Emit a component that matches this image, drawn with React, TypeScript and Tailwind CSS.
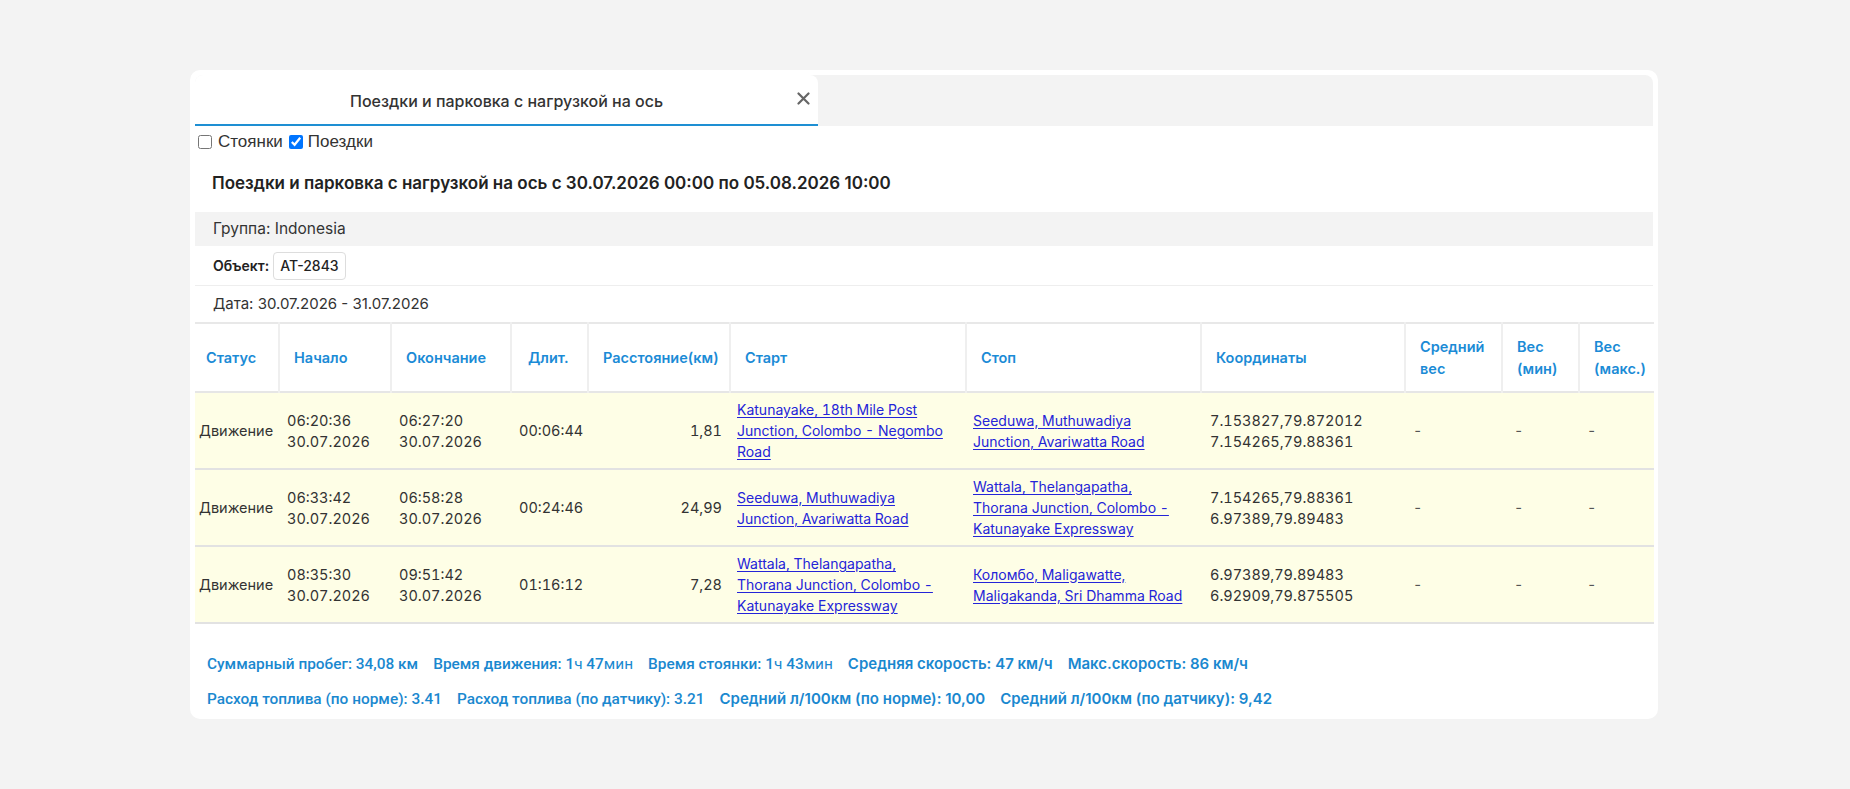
import { Fragment } from 'react';

interface Trip {
  start: [string, string];
  end: [string, string];
  duration: string;
  distance: string;
  from: string[];
  to: string[];
  coords: [string, string];
}

const trips: Trip[] = [
  {
    start: ['06:20:36', '30.07.2026'],
    end: ['06:27:20', '30.07.2026'],
    duration: '00:06:44',
    distance: '1,81',
    from: ['Katunayake, 18th Mile Post', 'Junction, Colombo - Negombo', 'Road'],
    to: ['Seeduwa, Muthuwadiya', 'Junction, Avariwatta Road'],
    coords: ['7.153827,79.872012', '7.154265,79.88361'],
  },
  {
    start: ['06:33:42', '30.07.2026'],
    end: ['06:58:28', '30.07.2026'],
    duration: '00:24:46',
    distance: '24,99',
    from: ['Seeduwa, Muthuwadiya', 'Junction, Avariwatta Road'],
    to: ['Wattala, Thelangapatha,', 'Thorana Junction, Colombo -', 'Katunayake Expressway'],
    coords: ['7.154265,79.88361', '6.97389,79.89483'],
  },
  {
    start: ['08:35:30', '30.07.2026'],
    end: ['09:51:42', '30.07.2026'],
    duration: '01:16:12',
    distance: '7,28',
    from: ['Wattala, Thelangapatha,', 'Thorana Junction, Colombo -', 'Katunayake Expressway'],
    to: ['Коломбо, Maligawatte,', 'Maligakanda, Sri Dhamma Road'],
    coords: ['6.97389,79.89483', '6.92909,79.875505'],
  },
];

const Lines = ({ lines }: { lines: string[] }) => (
  <>
    {lines.map((l, i) => (
      <Fragment key={i}>
        {l}
        {i < lines.length - 1 && <br />}
      </Fragment>
    ))}
  </>
);

const Link = ({ lines }: { lines: string[] }) => (
  <a href="#" className="text-[14px] text-[#2424d8] underline underline-offset-2 whitespace-nowrap">
    <Lines lines={lines} />
  </a>
);

const th = 'px-[14px] text-left align-middle font-semibold text-[#1b8bd6] border-l-2 border-[#efefef] first:border-l-0';
const td = 'px-[8px] align-middle';
const roboto = "font-['Roboto',sans-serif] font-medium text-[15.4px]";

export default function App() {
  return (
    <div className="min-h-screen bg-[#f3f3f3] pt-[70px]">
      <div className="ml-[190px] w-[1468px] bg-white rounded-[10px] px-[5px] pt-[5px] pb-[10px] text-[#333]">
        {/* tabs */}
        <div className="h-[51px] bg-[#f3f3f3] rounded-t-[8px] flex">
          <div className="relative w-[623px] bg-white rounded-t-[8px] border-b-2 border-[#1e8fd3] flex items-center justify-center pt-[3px] font-['Inter',sans-serif] font-medium text-[16px] text-[#333]">
            Поездки и парковка с нагрузкой на ось
            <svg className="absolute right-[8px] top-[17px]" width="13" height="13" viewBox="0 0 13 13">
              <path d="M1.5 1.5 L11.5 11.5 M11.5 1.5 L1.5 11.5" stroke="#666" strokeWidth="2.2" strokeLinecap="round" />
            </svg>
          </div>
        </div>

        {/* filters */}
        <div className="h-[24px] mt-[4px] flex items-center font-['Liberation_Sans',sans-serif] text-[17px] text-[#333]">
          <label className="flex items-center">
            <input type="checkbox" className="w-[14px] h-[14px] ml-[3px] mr-[6px]" />
            Стоянки
          </label>
          <label className="flex items-center ml-[6px]">
            <input type="checkbox" defaultChecked className="w-[14px] h-[14px] mr-[5px]" />
            Поездки
          </label>
        </div>

        <div className="font-['Inter',sans-serif]">
          <div className="pt-[17px] pb-[17px] pl-[17px] leading-[24px] text-[17px] font-semibold text-[#222]">
            Поездки и парковка с нагрузкой на ось с 30.07.2026 00:00 по 05.08.2026 10:00
          </div>

          <div className="h-[34px] bg-[#f3f3f3] flex items-center pl-[18px] text-[15.5px] text-[#333]">
            Группа: Indonesia
          </div>
          <div className="h-[40px] flex items-center pl-[18px] border-b border-[#eeeeee] text-[14px]">
            <span className="font-semibold text-[#222] mr-[4px]">Объект:</span>
            <span className="h-[28px] px-[6px] flex items-center border border-[#dddddd] rounded-[4px] font-medium text-[#222]">
              AT-2843
            </span>
          </div>
          <div className="h-[36px] flex items-center pl-[18px] text-[15px] text-[#333]">
            Дата: 30.07.2026 - 31.07.2026
          </div>

          <table className="w-full table-fixed border-collapse text-[14.5px] border-t-2 border-[#e8e8e8]">
            <colgroup>
              <col className="w-[84px]" />
              <col className="w-[112px]" />
              <col className="w-[120px]" />
              <col className="w-[77px]" />
              <col className="w-[142px]" />
              <col className="w-[236px]" />
              <col className="w-[235px]" />
              <col className="w-[204px]" />
              <col className="w-[97px]" />
              <col className="w-[77px]" />
              <col className="w-[75px]" />
            </colgroup>
            <thead>
              <tr className="h-[69px] border-b-2 border-[#e6e6e6] leading-[22px]">
                <th className={th + ' pl-[11px]'}>Статус</th>
                <th className={th}>Начало</th>
                <th className={th}>Окончание</th>
                <th className={th + ' pl-[16px]'}>Длит.</th>
                <th className={th}>Расстояние(км)</th>
                <th className={th}>Старт</th>
                <th className={th}>Стоп</th>
                <th className={th}>Координаты</th>
                <th className={th}>Средний<br />вес</th>
                <th className={th}>Вес<br />(мин)</th>
                <th className={th}>Вес<br />(макс.)</th>
              </tr>
            </thead>
            <tbody className="leading-[21px] text-[#333] tabular-nums">
              {trips.map((t, i) => (
                <tr key={i} className="h-[77px] bg-[#fefee6] border-b-2 border-[#e2e2e2]">
                  <td className="pl-[4px] align-middle">Движение</td>
                  <td className={td}><Lines lines={t.start} /></td>
                  <td className={td}><Lines lines={t.end} /></td>
                  <td className={td}>{t.duration}</td>
                  <td className={td + ' text-right'}>{t.distance}</td>
                  <td className="pl-[7px] align-middle"><Link lines={t.from} /></td>
                  <td className="pl-[7px] align-middle"><Link lines={t.to} /></td>
                  <td className="pl-[9px] align-middle"><Lines lines={t.coords} /></td>
                  <td className={td + ' text-[#555]'}>-</td>
                  <td className={td + ' pl-[12px] text-[#555]'}>-</td>
                  <td className={td + ' text-[#555]'}>-</td>
                </tr>
              ))}
            </tbody>
          </table>

          <div className="pl-[12px] pt-[30px] text-[15px] font-semibold text-[#1a88cf] leading-[20px]">
            <div className="flex gap-[15px]">
              <span className={roboto}>Суммарный пробег: 34,08 км</span>
              <span className={roboto}>
                Время движения: 1<span className="font-normal">ч</span> 47<span className="font-normal">мин</span>
              </span>
              <span className={roboto}>
                Время стоянки: 1<span className="font-normal">ч</span> 43<span className="font-normal">мин</span>
              </span>
              <span>Средняя скорость: 47 км/ч</span>
              <span>Макс.скорость: 86 км/ч</span>
            </div>
            <div className="flex gap-[15px] mt-[15px]">
              <span className={roboto}>Расход топлива (по норме): 3.41</span>
              <span className={roboto}>Расход топлива (по датчику): 3.21</span>
              <span>Средний л/100км (по норме): 10,00</span>
              <span>Средний л/100км (по датчику): 9,42</span>
            </div>
          </div>
        </div>
      </div>
    </div>
  );
}
